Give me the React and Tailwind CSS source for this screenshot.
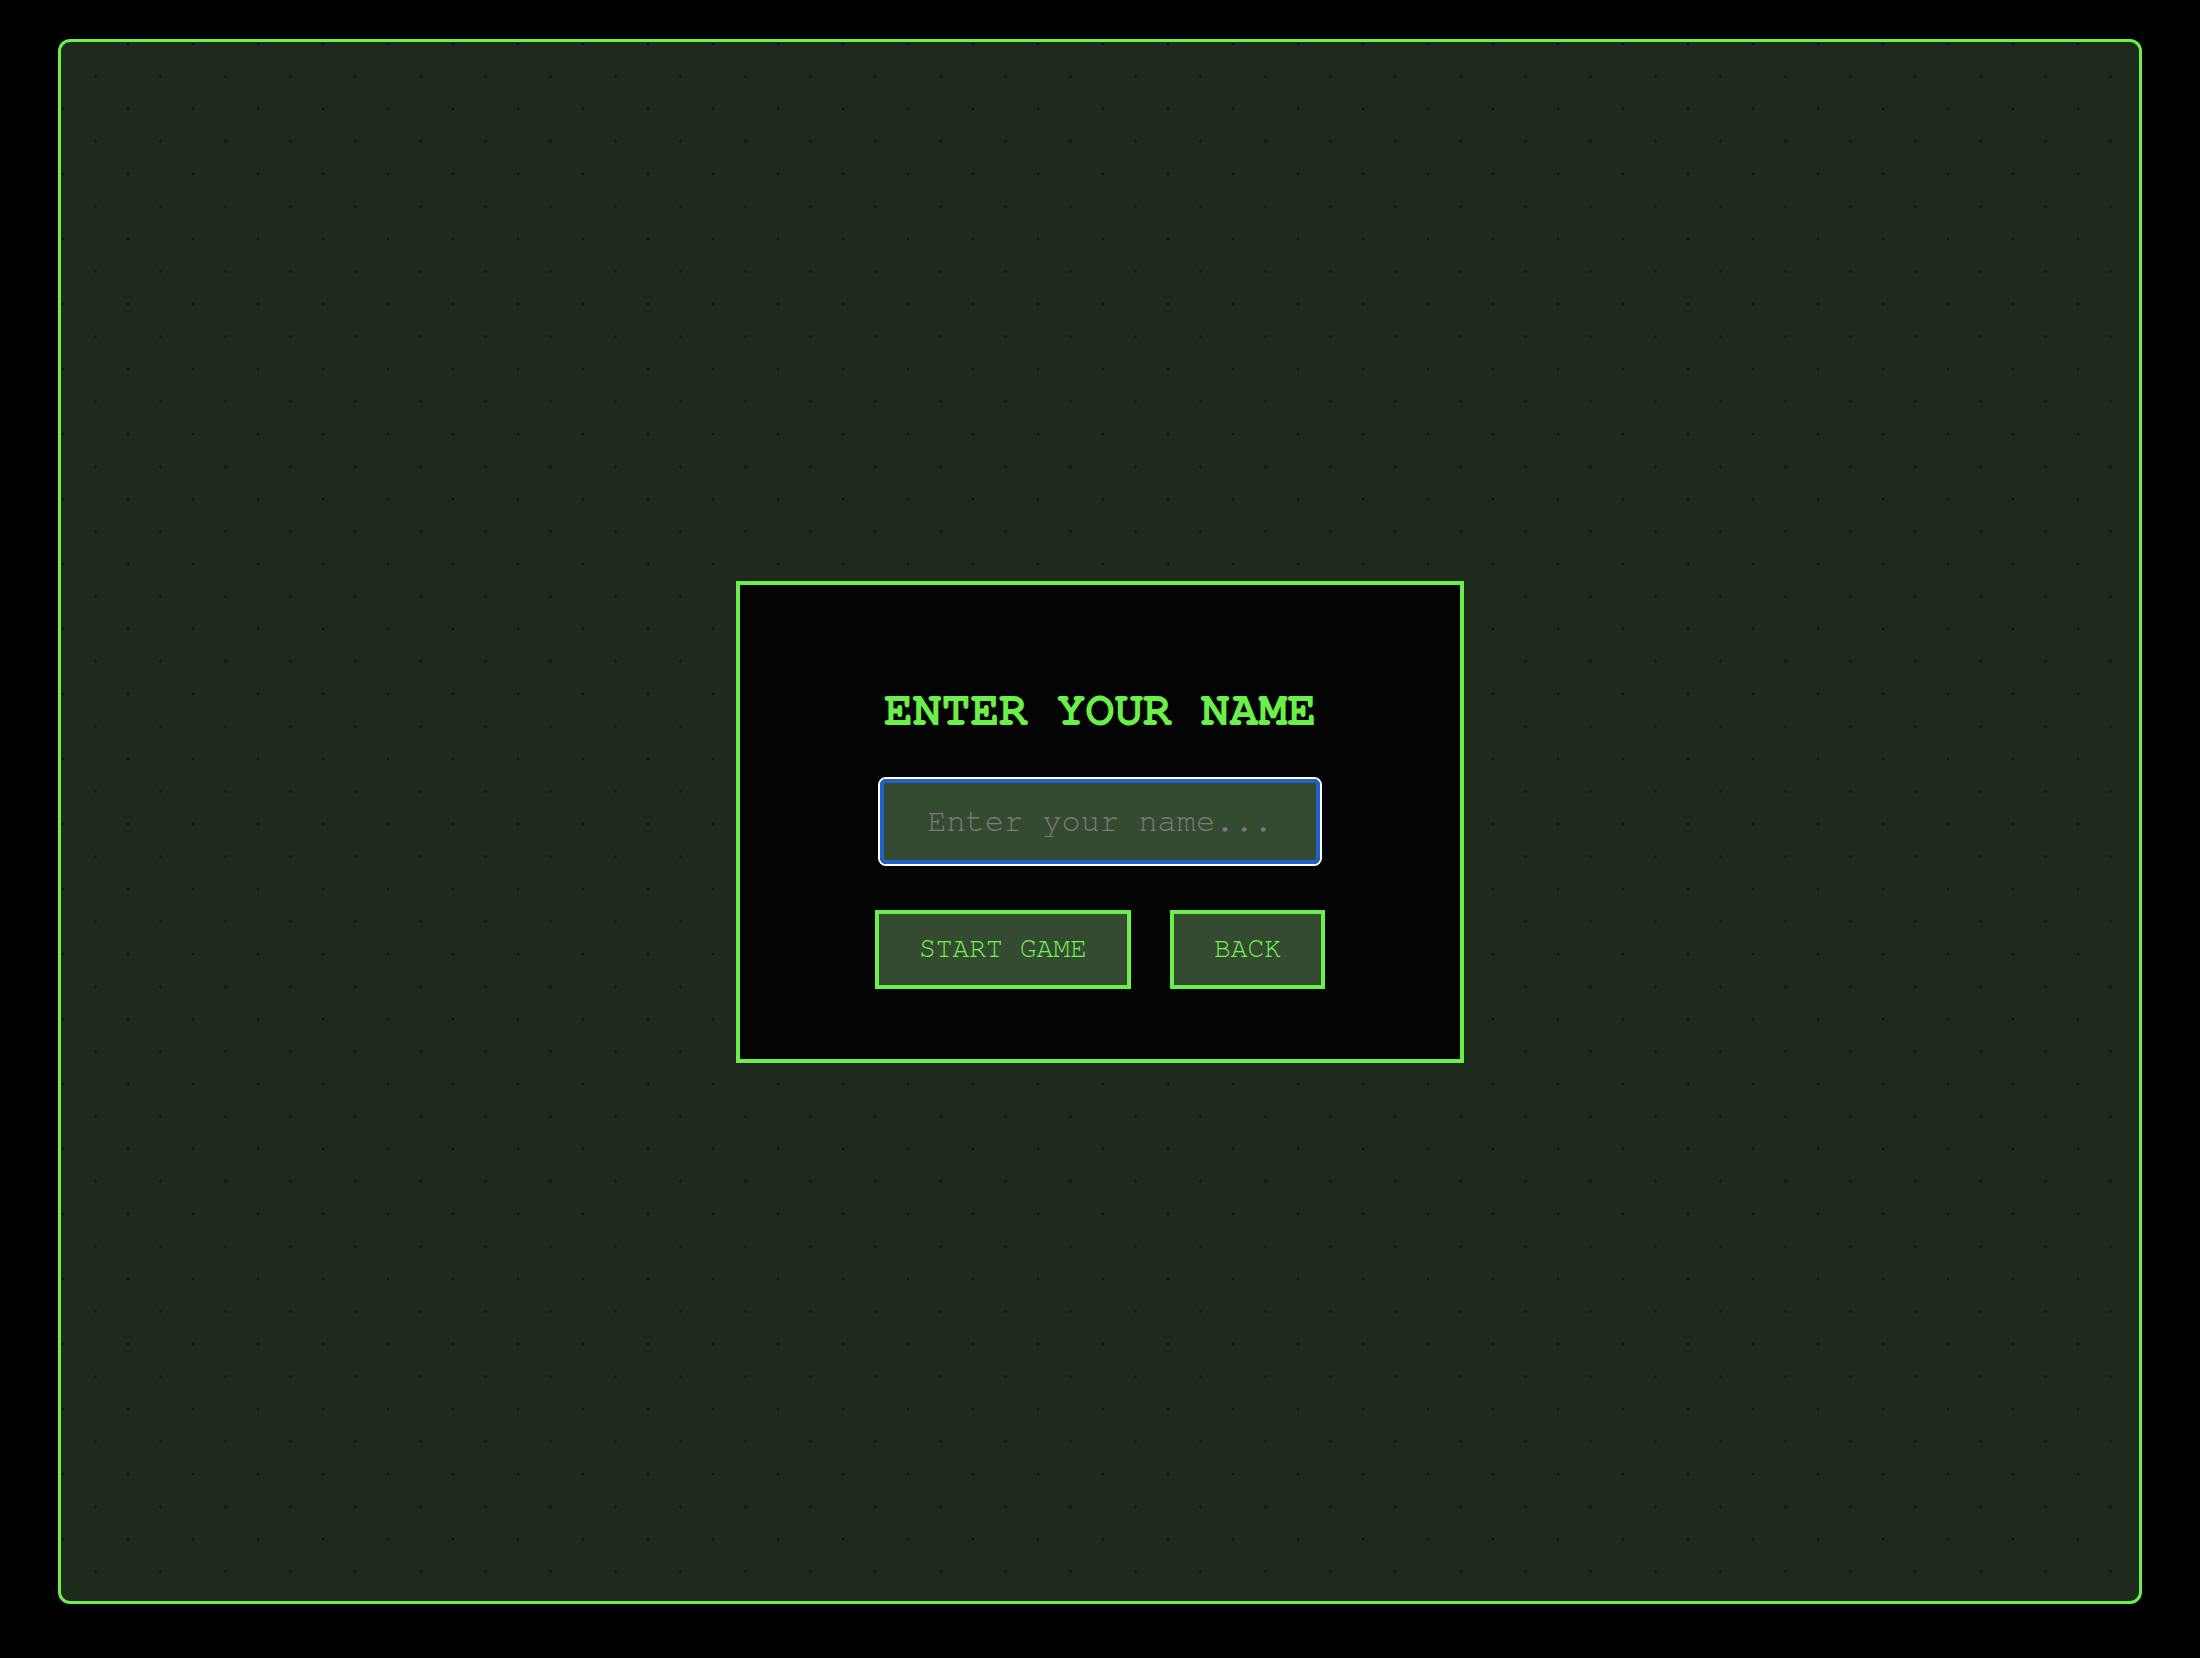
import React from "react";

export default function App() {
  return (
    <div className="w-[2200px] h-[1658px] bg-black pl-[58px] pt-[39px] font-['Nimbus_Mono_PS','FreeMono','Courier','Courier_New',monospace]">
      <div className="w-[2084px] h-[1565px] rounded-[12px] border-[3px] border-[#6bef4a] bg-[#1e2a1c] bg-[radial-gradient(circle_at_2px_2px,#0e160d_1.1px,transparent_1.8px),radial-gradient(circle_at_2px_2px,#0e160d_1.1px,transparent_1.8px)] bg-size-[65px_65px] bg-position-[0_0,32.5px_32.5px] flex items-center justify-center">
        <div className="w-[728px] h-[482px] border-4 border-[#6bef4a] bg-[#040404] flex flex-col items-center pt-[99px]">
          <h1 className="text-[48px] leading-[54px] font-bold text-[#6bef4a] tracking-normal">
            ENTER YOUR NAME
          </h1>
          <div className="mt-[39px] rounded-[8px] border-2 border-white">
            <input
              type="text"
              placeholder="Enter your name..."
              className="block w-[440px] h-[85px] rounded-[6px] border-4 border-[#2262c6] bg-[#344a31] text-center text-[32px] text-[#6bef4a] placeholder:text-[#7a7a7a] outline-none font-['Nimbus_Mono_PS','FreeMono','Courier','Courier_New',monospace]"
            />
          </div>
          <div className="mt-[44px] flex gap-[39px]">
            <button className="h-[79px] px-[40px] border-4 border-[#6bef4a] bg-[#344a31] text-[28px] text-[#72f450] font-['Nimbus_Mono_PS','FreeMono','Courier','Courier_New',monospace]">
              START GAME
            </button>
            <button className="h-[79px] px-[40px] border-4 border-[#6bef4a] bg-[#344a31] text-[28px] text-[#72f450] font-['Nimbus_Mono_PS','FreeMono','Courier','Courier_New',monospace]">
              BACK
            </button>
          </div>
        </div>
      </div>
    </div>
  );
}
